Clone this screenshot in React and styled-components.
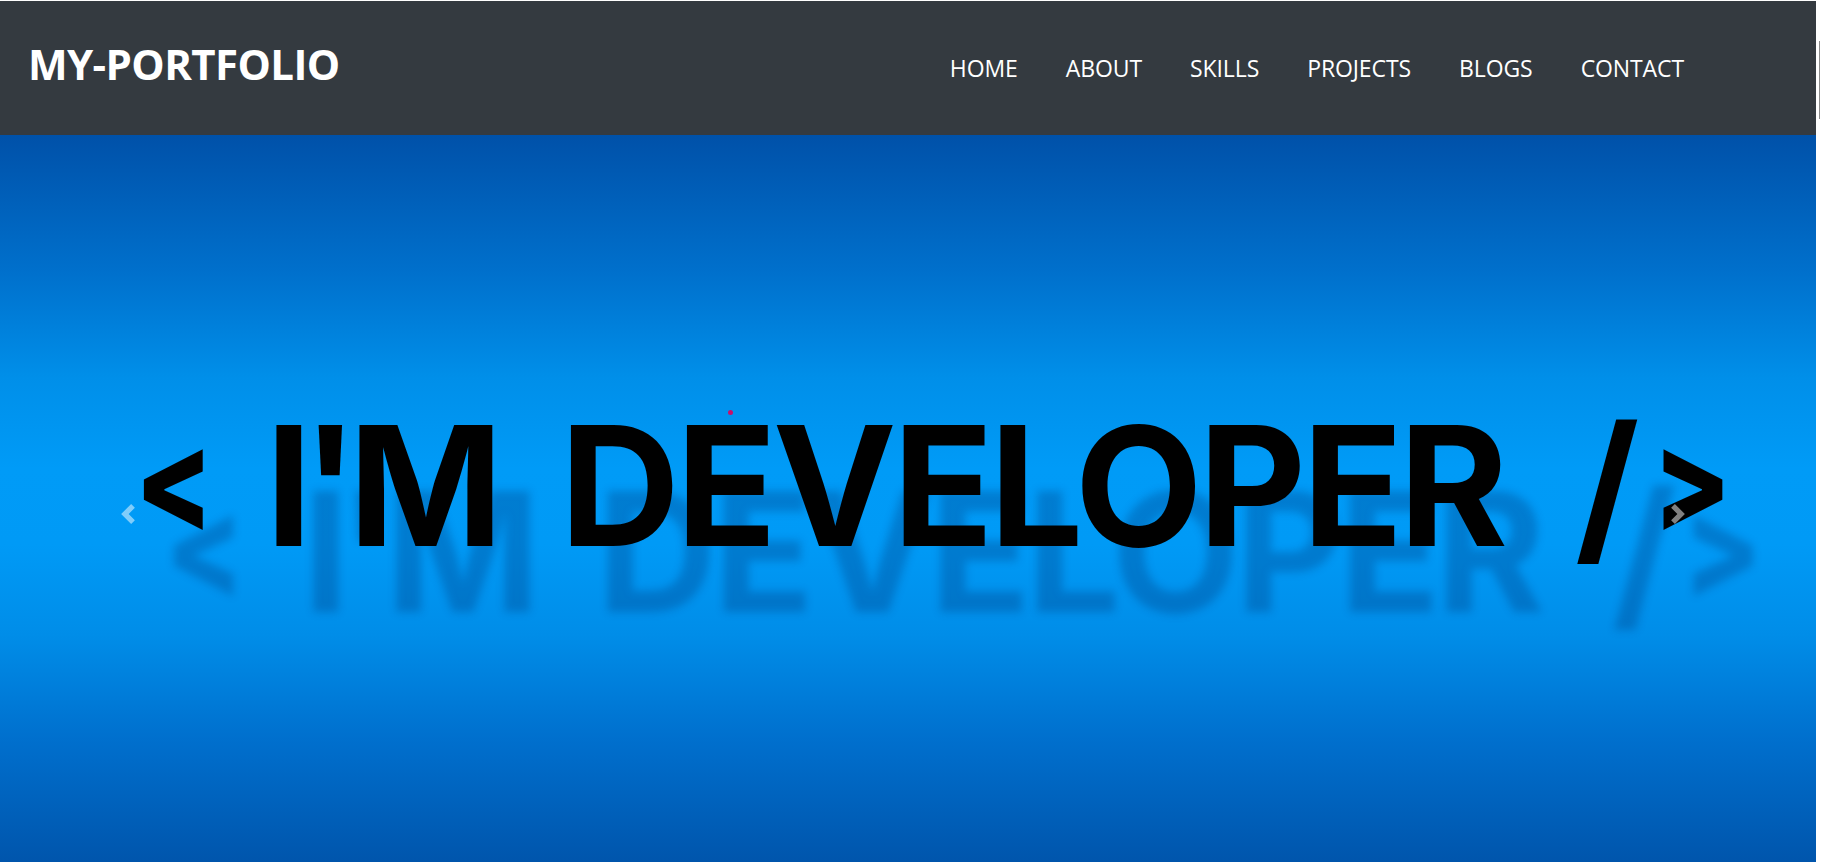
import React from 'react';
import styled, { createGlobalStyle } from 'styled-components';

const GlobalStyle = createGlobalStyle`
  html, body {
    margin: 0;
    padding: 0;
    overflow: hidden;
    background: #fff;
  }
  * {
    box-sizing: border-box;
  }
`;

const links = ['HOME', 'ABOUT', 'SKILLS', 'PROJECTS', 'BLOGS', 'CONTACT'];

function Chevron({ flip }) {
  return (
    <svg width="20" height="20" viewBox="0 0 8 8" fill="#fff">
      <path
        d="M5.25 0l-4 4 4 4 1.5-1.5L4.25 4l2.5-2.5L5.25 0z"
        transform={flip ? 'rotate(180 4 4)' : undefined}
      />
    </svg>
  );
}

export default function App() {
  return (
    <>
      <GlobalStyle />
      <Page>
        <Main>
          <Navbar>
            <Brand>MY-PORTFOLIO</Brand>
            <NavList>
              {links.map((l) => (
                <NavItem key={l}>{l}</NavItem>
              ))}
            </NavList>
          </Navbar>
          <Carousel>
            <Control side="left">
              <Chevron />
            </Control>
            <Headline>
              <Bracket>&lt;</Bracket>
              <Word tight>I'M</Word>
              <Word>DEVELOPER</Word>
              <Closing>
                <Word>/</Word>
                <Bracket>&gt;</Bracket>
              </Closing>
            </Headline>
            <Dot />
            <Control side="right">
              <Chevron flip />
            </Control>
          </Carousel>
        </Main>
        <ScrollTrack>
          <ScrollThumb />
        </ScrollTrack>
      </Page>
    </>
  );
}

const Page = styled.div`
  display: flex;
  height: 862px;
  padding-top: 1px;
  overflow: hidden;
  background: #fff;
`;

const Main = styled.div`
  flex: 1;
  display: flex;
  flex-direction: column;
  min-width: 0;
`;

const Navbar = styled.nav`
  height: 134px;
  flex-shrink: 0;
  background: #343a40;
  display: flex;
  align-items: center;
  padding: 0 0 0 28px;
`;

const Brand = styled.div`
  font-family: 'Open Sans', sans-serif;
  font-weight: 700;
  font-size: 42px;
  letter-spacing: -0.6px;
  color: #fff;
  margin-top: -10px;
`;

const NavList = styled.ul`
  display: flex;
  list-style: none;
  margin: 0 108px 0 auto;
  padding: 0;
`;

const NavItem = styled.li`
  font-family: 'Open Sans', sans-serif;
  font-size: 23px;
  letter-spacing: -0.1px;
  color: #fff;
  padding: 0 24px;
`;

const Carousel = styled.section`
  position: relative;
  height: 758px;
  flex-shrink: 0;
  display: flex;
  justify-content: center;
  align-items: flex-start;
  padding: 268px 0 0 28px;
  background: linear-gradient(
    180deg,
    #0051a9 0%,
    #0070cc 18%,
    #008fe9 32%,
    #009bf7 44%,
    #009af6 54%,
    #008de8 66%,
    #006fcd 80%,
    #0055ac 96%,
    #00509f 100%
  );
  overflow: hidden;
`;

const Headline = styled.h1`
  margin: 0;
  display: flex;
  align-items: baseline;
  gap: 66px;
  font-family: 'Inter', sans-serif;
  font-weight: 700;
  font-size: 166px;
  line-height: 1;
  white-space: nowrap;
  color: #000;
  text-shadow: 37px 66px 9px rgba(0, 40, 100, 0.26);
`;

const Word = styled.span`
  letter-spacing: ${({ tight }) => (tight ? '-10px' : '-4px')};
  margin-right: ${({ tight }) => (tight ? '1px' : '0')};
`;

const Closing = styled.span`
  display: flex;
  align-items: baseline;
  gap: 9px;
  margin-left: 5px;
`;

const Bracket = styled.span`
  display: inline-block;
  font-size: 140px;
  font-weight: 800;
  transform: translateY(-15px) scaleX(0.82);
  margin-right: -22px;
`;

const Dot = styled.span`
  position: absolute;
  left: 728px;
  top: 275px;
  width: 5px;
  height: 5px;
  border-radius: 50%;
  background: #c8106a;
`;

const Control = styled.div`
  position: absolute;
  top: 0;
  bottom: 0;
  width: 256px;
  display: flex;
  align-items: center;
  justify-content: center;
  opacity: 0.5;
  ${({ side }) => (side === 'left' ? 'left: 0;' : 'right: 10px;')}
`;

const ScrollTrack = styled.div`
  width: 6px;
  flex-shrink: 0;
  background: #fff;
  position: relative;
`;

const ScrollThumb = styled.div`
  position: absolute;
  left: 3px;
  top: 40px;
  width: 1px;
  height: 78px;
  background: #8a8a8a;
`;
